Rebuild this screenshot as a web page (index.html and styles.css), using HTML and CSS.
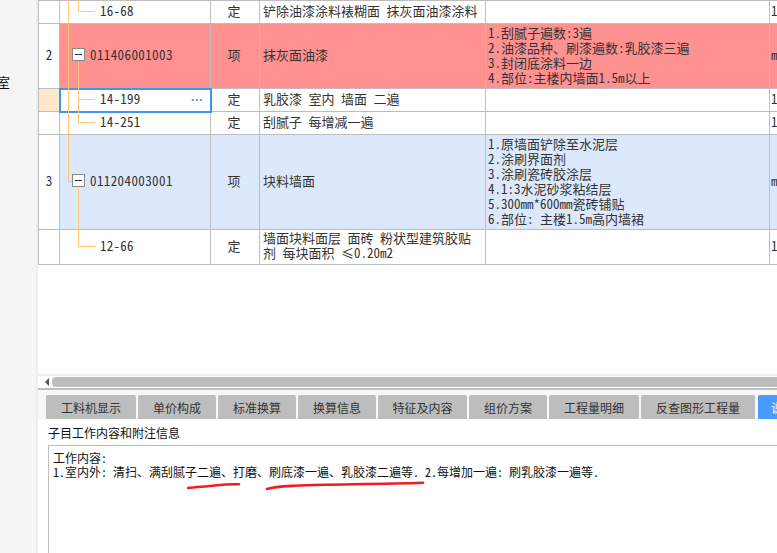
FILE: index.html
```html
<!DOCTYPE html>
<html lang="zh-CN">
<head>
<meta charset="utf-8">
<title>子目工作内容</title>
<link rel="stylesheet" href="styles.css">
</head>
<body>
<div class="page">
  <aside class="side"><div class="side-label">室</div></aside>
  <main class="main">
    <section class="grid">
      <table class="table">
        <colgroup><col class="c1"><col class="c2"><col class="c3"><col class="c4"><col class="c5"><col class="c6"></colgroup>
        <tbody>
          <tr class="r1">
            <td class="num"></td><td class="code"><span class="sub">16-68</span></td><td class="mid">定</td>
            <td class="name">铲除油漆涂料裱糊面 抹灰面油漆涂料</td><td class="desc"></td><td class="end">1</td>
          </tr>
          <tr class="r2 red">
            <td class="num">2</td><td class="code"><span class="node"><span class="box"></span>011406001003</span></td><td class="mid">项</td>
            <td class="name">抹灰面油漆</td>
            <td class="desc">1.刮腻子遍数:3遍<br>2.油漆品种、刷漆遍数:乳胶漆三遍<br>3.封闭底涂料一边<br>4.部位:主楼内墙面1.5m以上</td><td class="end">m2</td>
          </tr>
          <tr class="r1">
            <td class="num cur"></td><td class="code sel"><span class="sub">14-199</span><span class="more">···</span></td><td class="mid">定</td>
            <td class="name">乳胶漆 室内 墙面 二遍</td><td class="desc"></td><td class="end">1</td>
          </tr>
          <tr class="r1">
            <td class="num"></td><td class="code"><span class="sub">14-251</span></td><td class="mid">定</td>
            <td class="name">刮腻子 每增减一遍</td><td class="desc"></td><td class="end">1</td>
          </tr>
          <tr class="r3 blue">
            <td class="num">3</td><td class="code"><span class="node"><span class="box"></span>011204003001</span></td><td class="mid">项</td>
            <td class="name">块料墙面</td>
            <td class="desc">1.原墙面铲除至水泥层<br>2.涂刷界面剂<br>3.涂刷瓷砖胶涂层<br>4.1:3水泥砂浆粘结层<br>5.300mm*600mm瓷砖铺贴<br>6.部位: 主楼1.5m高内墙裙</td><td class="end">m2</td>
          </tr>
          <tr class="r4">
            <td class="num"></td><td class="code"><span class="sub">12-66</span></td><td class="mid">定</td>
            <td class="name">墙面块料面层 面砖 粉状型建筑胶贴<br>剂 每块面积 ≤0.20m2</td><td class="desc"></td><td class="end">1</td>
          </tr>
        </tbody>
      </table>
      <svg class="tree" width="70" height="264" viewBox="0 0 70 264" aria-hidden="true">
        <path d="M30.5 0V181.5H34M40.5 0V11.5H57M40.5 62V122.5H57M40.5 99.5H57M40.5 188V246.5H57" fill="none" stroke="#ffc874" stroke-width="1"/>
      </svg>
    </section>
    <div class="scroll">
      <span class="arrow"></span>
      <span class="thumb"></span>
    </div>
    <nav class="tabs">
      <span class="tab t1">工料机显示</span>
      <span class="tab t2">单价构成</span>
      <span class="tab t2">标准换算</span>
      <span class="tab t2">换算信息</span>
      <span class="tab t3">特征及内容</span>
      <span class="tab t2">组价方案</span>
      <span class="tab t4">工程量明细</span>
      <span class="tab t5">反查图形工程量</span>
      <span class="tab active">说明信息</span>
    </nav>
    <section class="info">
      <div class="info-title">子目工作内容和附注信息</div>
      <div class="info-box">工作内容:<br>1.室内外: 清扫、满刮腻子二遍、打磨、刷底漆一遍、乳胶漆二遍等. 2.每增加一遍: 刷乳胶漆一遍等.</div>
      <svg class="marks" width="250" height="12" viewBox="0 0 250 12" aria-hidden="true">
        <path d="M1 9C10 8 20 7.500 28 6.500S44 5 52 5.300M80 10C88 7.500 100 7.300 112 6.500C140 5 190 5.500 236 3.800" fill="none" stroke="#ee1c25" stroke-width="2.600" stroke-linecap="round"/>
      </svg>
    </section>
  </main>
</div>
</body>
</html>
```
FILE: styles.css
```css
* { box-sizing: border-box; }
html, body { margin: 0; height: 100%; overflow: hidden; background: #fff; }
body { font-family: "Noto Sans Mono CJK SC", "Noto Sans CJK SC", sans-serif; color: #222; font-size: 12px; }
.page { display: flex; width: 777px; height: 553px; overflow: hidden; }
.side { flex: 0 0 36px; background: #f5f5f5; overflow: hidden; }
.side-label { margin: 73px 0 0 -3px; font-size: 13px; line-height: 18px; color: #111; }
.main { flex: 1; min-width: 0; border-left: 2px solid #eee; display: flex; flex-direction: column; overflow: hidden; }

.grid { position: relative; height: 374px; flex: none; overflow: hidden; }
.table { border-collapse: collapse; table-layout: fixed; width: 831px; font-size: 13px; line-height: 15px; color: #333; }
.c1 { width: 21px; } .c2 { width: 151px; } .c3 { width: 49px; } .c4 { width: 226px; } .c5 { width: 284px; } .c6 { width: 100px; }
.table td { border: 1px solid #bdbdbd; padding: 0 0 4px; vertical-align: middle; white-space: nowrap; overflow: hidden; }
.r1 td { height: 23px; }
.r2 td { height: 65px; }
.r3 td { height: 95px; }
.r4 td { height: 35px; }
.red td { background: #ff9191; }
.blue td { background: #dce9fd; }
.red .num, .blue .num { background: #fff; }
.table .cur { background: #fde8cc; }
.table .num { text-align: center; }
.table .mid { text-align: center; padding-right: 2px; }
.table .name { padding-left: 3px; }
.table .desc { padding-left: 2px; padding-bottom: 3px; }
.table .end { padding-left: 1px; }
.code { position: relative; }
.sub { display: block; padding-left: 40px; letter-spacing: .25px; }
.node { display: flex; align-items: center; gap: 5px; padding-left: 12px; letter-spacing: .4px; }
.box { flex: none; width: 13px; height: 13px; border: 1px solid #888; background: #fff; position: relative; }
.box::after { content: ""; position: absolute; left: 2px; right: 2px; top: 5px; height: 1px; background: #333; }
.table .sel { outline: 2px solid #4096f0; outline-offset: -1px; }
.more { position: absolute; right: 7px; top: 4px; color: #3d8fd9; font-family: "Liberation Sans", sans-serif; font-weight: 700; font-size: 12px; line-height: 15px; }
.tree { position: absolute; left: 0; top: 0; pointer-events: none; }

.scroll { flex: none; height: 16px; background: #fff; border-top: 2px solid #eee; border-bottom: 2px solid #bdbdbd; display: flex; align-items: center; gap: 3px; padding: 0 0 0 7px; }
.arrow { flex: none; width: 0; height: 0; border: 4px solid transparent; border-right: 4px solid #555; border-left: 0; }
.thumb { flex: 1; height: 10px; background: #bdbdbd; border-radius: 4px 0 0 4px; margin-right: -4px; }

.tabs { flex: none; height: 29px; padding: 5px 0 0 8px; background: #f7f7f7; display: flex; gap: 2px; overflow: hidden; }
.tab { flex: none; height: 24px; background: #bdbdbd; border-radius: 2px 2px 0 0; text-align: center; line-height: 25px; color: #333; font-size: 12px; white-space: nowrap; overflow: hidden; }
.t1 { width: 90px; } .t2 { width: 78px; } .t3 { width: 89px; } .t4 { width: 90px; } .t5 { width: 114px; }
.active { width: 90px; margin-left: 1px; padding-left: 13px; text-align: left; background: #4a9bff; color: #fff; }

.info { position: relative; flex: 1; padding: 5px 0 0 10px; }
.info-title { height: 21px; line-height: 17px; color: #111; }
.info-box { height: 120px; border: 1px solid #bdbdbd; border-right: 0; padding: 5px 4px; line-height: 14px; color: #111; white-space: nowrap; overflow: hidden; }
.marks { position: absolute; left: 149px; top: 60px; }
```
